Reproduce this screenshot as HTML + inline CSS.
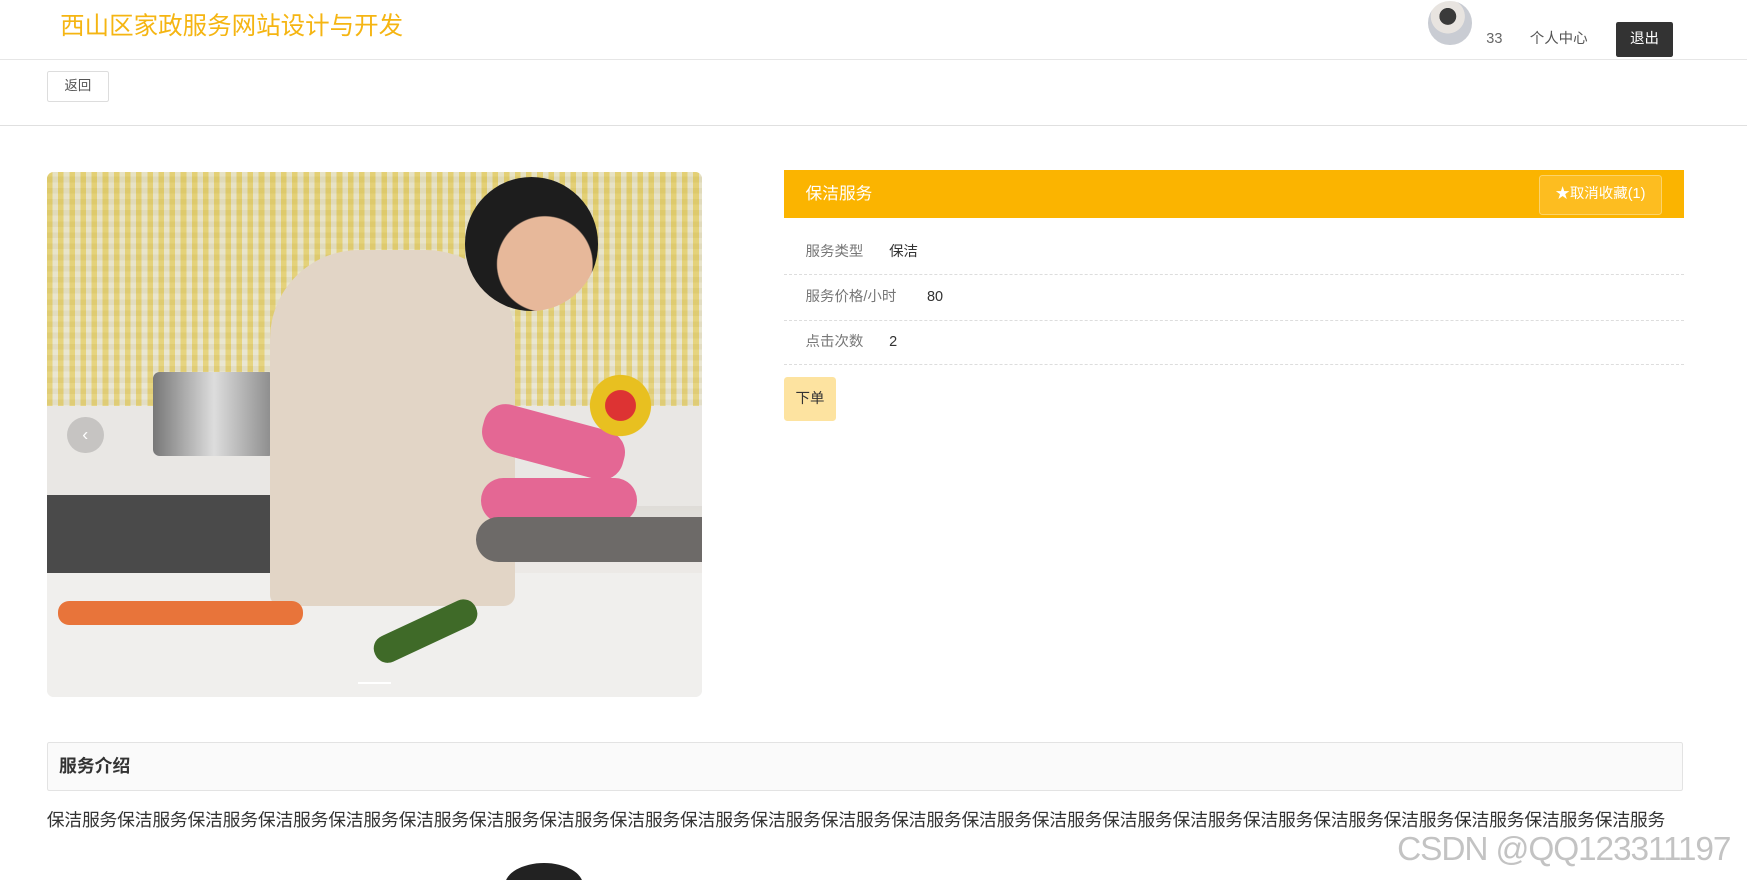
<!DOCTYPE html>
<html><head><meta charset="utf-8"><style>
html,body{margin:0;padding:0;background:#fff;overflow:hidden}
body{width:1568px;height:790px;zoom:1.11417;position:relative;font-family:"Liberation Sans","Noto Sans CJK SC",sans-serif;color:#333}
.abs{position:absolute}
.r{line-height:18px}
</style></head><body>
<div class="abs" style="left:54px;top:9px;font-size:22px;color:#f5b512;line-height:30px">西山区家政服务网站设计与开发</div>
<div class="abs" style="left:1282px;top:1px;width:39px;height:39px;border-radius:50%;background:radial-gradient(circle at 45% 35%,#3a3a3a 0 22%,#e8e4e0 23% 45%,#c9ccd3 46%)"></div>
<div class="abs r" style="left:1334px;top:26px;font-size:13px;color:#666">33</div>
<div class="abs r" style="left:1373px;top:26px;font-size:13px;color:#555">个人中心</div>
<div class="abs" style="left:1450px;top:20px;width:52px;height:31px;background:#333;color:#fff;font-size:13px;line-height:31px;text-align:center;border-radius:2px">退出</div>
<div class="abs" style="left:0;top:53px;width:1568px;height:1px;background:#e6e6e6"></div>
<div class="abs" style="left:42px;top:64px;width:54px;height:26px;border:1px solid #ddd;border-radius:2px;font-size:12px;line-height:26px;text-align:center;color:#555">返回</div>
<div class="abs" style="left:0;top:112px;width:1568px;height:1px;background:#e0e0e0"></div>

<div class="abs" style="left:42px;top:154px;width:588px;height:472px;border-radius:6px;overflow:hidden;background:linear-gradient(180deg,#d9cf9a 0,#e0d9b8 40%,#d8d6d0 58%,#ece9e6 75%,#f1efed 100%)">
 <div class="abs" style="left:0;top:0;width:588px;height:270px;background:repeating-linear-gradient(90deg,rgba(230,200,60,.5) 0 5px,rgba(240,240,230,.4) 5px 10px),repeating-linear-gradient(0deg,rgba(200,190,150,.3) 0 5px,rgba(255,255,255,.2) 5px 10px)"></div>
 <div class="abs" style="left:0;top:210px;width:588px;height:90px;background:#e9e7e4"></div>
 <div class="abs" style="left:0;top:290px;width:220px;height:100px;background:#4a4a4a"></div>
 <div class="abs" style="left:0;top:360px;width:588px;height:112px;background:#f0efed"></div>
 <div class="abs" style="left:95px;top:180px;width:110px;height:75px;background:linear-gradient(90deg,#777,#ddd,#888);border-radius:6px"></div>
 <div class="abs" style="left:200px;top:70px;width:220px;height:320px;background:#e2d5c6;border-radius:80px 80px 10px 10px"></div>
 <div class="abs" style="left:375px;top:5px;width:120px;height:120px;border-radius:50%;background:radial-gradient(circle at 60% 65%,#e7b89a 0 40%,#1d1d1d 41%)"></div>
 <div class="abs" style="left:390px;top:220px;width:130px;height:45px;background:#e46794;border-radius:20px;transform:rotate(15deg)"></div>
 <div class="abs" style="left:390px;top:275px;width:140px;height:40px;background:#e46794;border-radius:20px"></div>
 <div class="abs" style="left:470px;top:180px;width:90px;height:60px;background:radial-gradient(circle,#d33 0 25%,#e8c020 26% 50%,transparent 51%)"></div>
 <div class="abs" style="left:385px;top:310px;width:203px;height:40px;background:#6d6a68;border-radius:20px 0 0 20px"></div>
 <div class="abs" style="left:10px;top:385px;width:220px;height:22px;background:#e8743a;border-radius:10px"></div>
 <div class="abs" style="left:290px;top:400px;width:100px;height:25px;background:#3f6a28;border-radius:12px;transform:rotate(-25deg)"></div>
 <div class="abs" style="left:18px;top:220px;width:33px;height:33px;border-radius:50%;background:rgba(0,0,0,.15);color:#fff;text-align:center;line-height:31px;font-size:16px">‹</div>
 <div class="abs" style="left:279px;top:458px;width:30px;height:2px;background:#fff"></div>
</div>

<div class="abs" style="left:704px;top:153px;width:807px;height:43px;background:#fbb400"></div>
<div class="abs" style="left:723px;top:164px;font-size:15px;color:#fff;line-height:20px">保洁服务</div>
<div class="abs" style="left:1381px;top:157px;width:109px;height:34px;border:1px solid #fcd36a;border-radius:3px;background:#fdbd20;color:#fff;font-size:13px;line-height:34px;text-align:center">★取消收藏(1)</div>
<div class="abs r" style="left:723px;top:217px;font-size:13px;color:#777">服务类型</div><div class="abs r" style="left:798px;top:217px;font-size:13px">保洁</div>
<div class="abs" style="left:704px;top:246px;width:807px;border-top:1px dashed #ddd"></div>
<div class="abs r" style="left:723px;top:258px;font-size:13px;color:#777">服务价格/小时</div><div class="abs r" style="left:832px;top:258px;font-size:13px">80</div>
<div class="abs" style="left:704px;top:287px;width:807px;border-top:1px dashed #ddd"></div>
<div class="abs r" style="left:723px;top:298px;font-size:13px;color:#777">点击次数</div><div class="abs r" style="left:798px;top:298px;font-size:13px">2</div>
<div class="abs" style="left:704px;top:327px;width:807px;border-top:1px dashed #ddd"></div>
<div class="abs" style="left:704px;top:338px;width:46px;height:40px;background:#fde3a0;border-radius:3px;font-size:13px;line-height:40px;text-align:center">下单</div>

<div class="abs" style="left:42px;top:666px;width:1467px;height:42px;border:1px solid #e3e3e3;border-radius:2px;background:#fafafa"></div>
<div class="abs" style="left:53px;top:677px;font-size:16px;font-weight:bold;line-height:22px">服务介绍</div>
<div class="abs" style="left:42px;top:725px;font-size:16px;white-space:nowrap;letter-spacing:-0.2px;line-height:22px">保洁服务保洁服务保洁服务保洁服务保洁服务保洁服务保洁服务保洁服务保洁服务保洁服务保洁服务保洁服务保洁服务保洁服务保洁服务保洁服务保洁服务保洁服务保洁服务保洁服务保洁服务保洁服务保洁服务</div>
<div class="abs" style="left:453px;top:775px;width:70px;height:40px;border-radius:50%;background:#222"></div>
<div class="abs" style="left:1254px;top:745px;font-size:30px;color:rgba(180,180,180,.8);white-space:nowrap;line-height:36px;letter-spacing:-1px">CSDN @QQ123311197</div>
</body></html>
